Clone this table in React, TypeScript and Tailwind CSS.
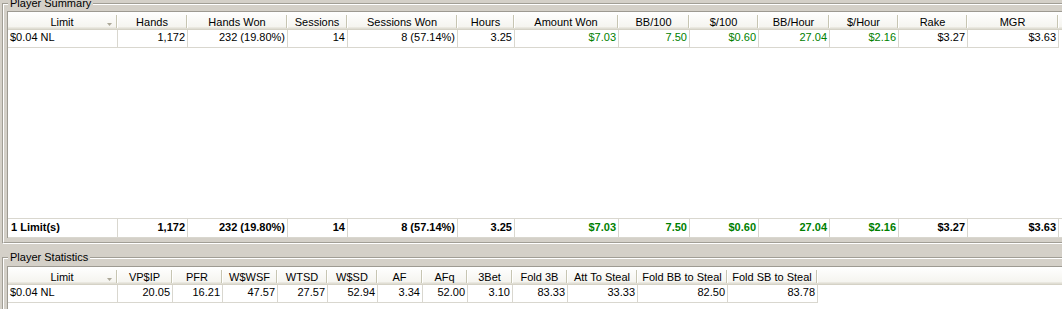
import React from 'react';

type Col = { h: string; w: string; v: string; f?: string; green?: boolean; left?: boolean };

const summaryCols: Col[] = [
  { h: 'Limit', w: 'w-[110px]', v: '$0.04 NL', f: '1 Limit(s)', left: true },
  { h: 'Hands', w: 'w-[70px]', v: '1,172', f: '1,172' },
  { h: 'Hands Won', w: 'w-[100px]', v: '232 (19.80%)', f: '232 (19.80%)' },
  { h: 'Sessions', w: 'w-[60px]', v: '14', f: '14' },
  { h: 'Sessions Won', w: 'w-[110px]', v: '8 (57.14%)', f: '8 (57.14%)' },
  { h: 'Hours', w: 'w-[57px]', v: '3.25', f: '3.25' },
  { h: 'Amount Won', w: 'w-[104px]', v: '$7.03', f: '$7.03', green: true },
  { h: 'BB/100', w: 'w-[71px]', v: '7.50', f: '7.50', green: true },
  { h: '$/100', w: 'w-[69px]', v: '$0.60', f: '$0.60', green: true },
  { h: 'BB/Hour', w: 'w-[71px]', v: '27.04', f: '27.04', green: true },
  { h: '$/Hour', w: 'w-[69px]', v: '$2.16', f: '$2.16', green: true },
  { h: 'Rake', w: 'w-[69px]', v: '$3.27', f: '$3.27' },
  { h: 'MGR', w: 'w-[91px]', v: '$3.63', f: '$3.63' },
];

const statCols: Col[] = [
  { h: 'Limit', w: 'w-[110px]', v: '$0.04 NL', left: true },
  { h: 'VP$IP', w: 'w-[55px]', v: '20.05' },
  { h: 'PFR', w: 'w-[50px]', v: '16.21' },
  { h: 'W$WSF', w: 'w-[55px]', v: '47.57' },
  { h: 'WTSD', w: 'w-[50px]', v: '27.57' },
  { h: 'W$SD', w: 'w-[50px]', v: '52.94' },
  { h: 'AF', w: 'w-[45px]', v: '3.34' },
  { h: 'AFq', w: 'w-[45px]', v: '52.00' },
  { h: '3Bet', w: 'w-[45px]', v: '3.10' },
  { h: 'Fold 3B', w: 'w-[55px]', v: '83.33' },
  { h: 'Att To Steal', w: 'w-[70px]', v: '33.33' },
  { h: 'Fold BB to Steal', w: 'w-[90px]', v: '82.50' },
  { h: 'Fold SB to Steal', w: 'w-[90px]', v: '83.78' },
];

function HeaderCell({ col, arrow }: { col: Col; arrow?: boolean }) {
  return (
    <div className={`${col.w} shrink-0 flex relative`}>
      <span className="flex-1 text-center leading-[20px] whitespace-nowrap overflow-hidden">{col.h}</span>
      {arrow && (
        <svg className="absolute right-[6px] top-[11px]" width="5" height="3" viewBox="0 0 5 3">
          <path d="M0 0H5L2.5 3Z" fill="#aca899" />
        </svg>
      )}
      <div className="mt-[3px] h-[13px] w-px bg-[#c7c5b2] shrink-0" />
      <div className="mt-[3px] h-[13px] w-px bg-white shrink-0" />
    </div>
  );
}

const headerRow =
  'flex h-[18px] shrink-0 bg-linear-to-b from-white to-[#f3f2ec] shadow-[inset_0_-1px_0_#d5d2c6,inset_0_-2px_0_#e0ded4,inset_0_-3px_0_#eae8e0]';

function DataRow({ cols }: { cols: Col[] }) {
  return (
    <div className="flex h-[18px] shrink-0">
      {cols.map((c) => (
        <div
          key={c.h}
          className={`${c.w} shrink-0 border-r border-b border-[#d9d7cf] px-[2px] leading-[15px] whitespace-nowrap overflow-hidden ${
            c.left ? 'text-left' : 'text-right'
          } ${c.green ? 'text-[#008000]' : 'text-black'}`}
        >
          {c.v}
        </div>
      ))}
    </div>
  );
}

function FooterRow({ cols }: { cols: Col[] }) {
  return (
    <div className="flex h-[20px] shrink-0 border-t border-b border-[#d9d7cf] font-bold">
      {cols.map((c) => (
        <div
          key={c.h}
          className={`${c.w} shrink-0 border-r border-[#d9d7cf] leading-[17px] whitespace-nowrap overflow-hidden ${
            c.left ? 'text-left pl-[3px]' : 'text-right pr-[2px]'
          } ${c.green ? 'text-[#008000]' : 'text-black'}`}
        >
          {c.f}
        </div>
      ))}
    </div>
  );
}

function GroupBox({
  label,
  className,
  children,
}: {
  label: string;
  className: string;
  children: React.ReactNode;
}) {
  return (
    <div
      className={`relative ml-[2px] w-[1090px] border-t border-l border-b border-[#a19e95] border-b-white ${className}`}
    >
      <div className="border-t border-l border-b border-white border-b-[#a19e95] pt-[6px] pl-[3px] h-full">
        {children}
      </div>
      <span className="absolute left-[5px] top-[-7px] px-[2px] bg-[#d4d0c8] leading-[13px] text-black whitespace-nowrap">
        {label}
      </span>
    </div>
  );
}

export default function App() {
  return (
    <div className="w-[1062px] h-[309px] overflow-hidden bg-[#d4d0c8] font-['Liberation_Sans',Arial,sans-serif] text-[11px] text-black flex flex-col">
      <GroupBox label="Player Summary" className="mt-[3px] shrink-0">
        <div className="pb-[4px]">
          <div className="border-l border-t border-[#9d9a92] bg-white flex flex-col h-[227px]">
            <div className={headerRow}>
              {summaryCols.map((c, i) => (
                <HeaderCell key={c.h} col={c} arrow={i === 0} />
              ))}
              <div className="flex-1" />
            </div>
            <DataRow cols={summaryCols} />
            <div className="flex-1" />
            <FooterRow cols={summaryCols} />
          </div>
        </div>
      </GroupBox>
      <GroupBox label="Player Statistics" className="mt-[13px] shrink-0 h-[80px]">
        <div className="border-l border-t border-[#9d9a92] bg-white flex flex-col h-[80px] mt-[1px]">
          <div className={headerRow}>
            {statCols.map((c, i) => (
              <HeaderCell key={c.h} col={c} arrow={i === 0} />
            ))}
            <div className="flex-1" />
          </div>
          <DataRow cols={statCols} />
          <div className="flex-1" />
        </div>
      </GroupBox>
    </div>
  );
}
